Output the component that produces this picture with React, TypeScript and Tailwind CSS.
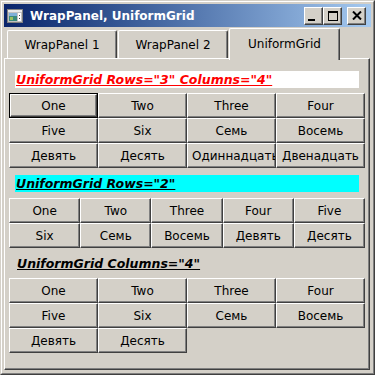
import React from 'react';

const font = { fontFamily: '"DejaVu Sans", Verdana, sans-serif' };

const raised =
  'flex items-center [justify-content:safe_center] overflow-hidden whitespace-nowrap bg-[#d4d0c8] border border-t-white border-l-white border-r-[#404040] border-b-[#404040] shadow-[inset_-1px_-1px_0_#808080] text-[12px] text-black px-[4px]';

const Btn = ({ label, focused }: { label: string; focused?: boolean }) => {
  if (focused) {
    return (
      <div className="flex border border-black">
        <div className={raised + ' flex-1'}>{label}</div>
      </div>
    );
  }
  return <div className={raised}>{label}</div>;
};

const first = ['One', 'Two', 'Three', 'Four', 'Five', 'Six', 'Семь', 'Восемь', 'Девять', 'Десять', 'Одиннадцать', 'Двенадцать'];
const second = ['One', 'Two', 'Three', 'Four', 'Five', 'Six', 'Семь', 'Восемь', 'Девять', 'Десять'];

const TitleButton = ({ children, className }: { children: React.ReactNode; className?: string }) => (
  <div
    className={
      'flex h-[18px] w-[19px] items-center justify-center bg-[#d4d0c8] border border-t-white border-l-white border-r-[#404040] border-b-[#404040] shadow-[inset_-1px_-1px_0_#808080] ' +
      (className ?? '')
    }
  >
    {children}
  </div>
);

const App = () => {
  return (
    <div style={font} className="h-[375px] w-[375px] border border-t-[#d4d0c8] border-l-[#d4d0c8] border-r-[#404040] border-b-[#404040] bg-[#d4d0c8]">
      <div className="flex h-full flex-col border border-t-white border-l-white border-r-[#808080] border-b-[#808080] p-[2px]">
        {/* title bar */}
        <div className="flex h-[23px] shrink-0 items-center bg-linear-to-r from-[#0a246a] to-[#a6caf0] pl-[3px] pr-[5px]">
          <svg width="16" height="14" viewBox="0 0 16 14">
            <rect x="0.5" y="0.5" width="15" height="13" fill="#c0c0c0" stroke="#808080" />
            <rect x="1" y="1" width="14" height="2" fill="#e8e8e8" />
            <rect x="2" y="4" width="8" height="8" fill="#3a8a7a" />
            <rect x="2" y="4" width="8" height="3" fill="#7fb0d8" />
            <rect x="3" y="8" width="3" height="3" fill="#9ac060" />
            <rect x="11" y="4" width="3" height="8" fill="#ffffff" />
            <rect x="12" y="6" width="1" height="1" fill="#404040" />
            <rect x="12" y="9" width="1" height="1" fill="#404040" />
          </svg>
          <div className="ml-[7px] text-[12px] font-bold text-white">WrapPanel, UniformGrid</div>
          <div className="ml-auto flex">
            <TitleButton>
              <div className="mt-[8px] mr-[4px] h-[2px] w-[7px] bg-black" />
            </TitleButton>
            <TitleButton>
              <div className="h-[10px] w-[10px] border border-t-2 border-black" />
            </TitleButton>
            <TitleButton className="ml-[5px]">
              <svg width="10" height="9" viewBox="0 0 10 9">
                <path d="M1 0.5 L9 8.5 M9 0.5 L1 8.5" stroke="black" strokeWidth="2" />
              </svg>
            </TitleButton>
          </div>
        </div>

        {/* tabs */}
        <div className="mt-[1px] flex h-[30px] shrink-0 items-end pl-[3px] text-[12px] text-black">
          <div className="flex h-[28px] w-[110px] items-center justify-center rounded-t-[2px] border border-b-0 border-t-white border-l-white border-r-[#404040] shadow-[inset_-1px_0_0_#808080]">
            WrapPanel 1
          </div>
          <div className="ml-[1px] flex h-[28px] w-[110px] items-center justify-center rounded-t-[2px] border border-b-0 border-t-white border-l-white border-r-[#404040] shadow-[inset_-1px_0_0_#808080]">
            WrapPanel 2
          </div>
          <div className="relative z-10 -mb-[2px] ml-[1px] flex h-[32px] w-[111px] items-center justify-center rounded-t-[2px] border border-b-0 border-t-white border-l-white border-r-[#404040] bg-[#d4d0c8] pb-[2px] shadow-[inset_-1px_0_0_#808080]">
            UniformGrid
          </div>
        </div>

        {/* tab content */}
        <div className="mr-[1px] mb-[1px] flex flex-1 flex-col border border-t-white border-l-white border-r-[#404040] border-b-[#404040] px-[4px] shadow-[inset_-1px_-1px_0_#808080]">
          <div className="mx-[6px] mt-[12px] h-[17px] bg-white pl-[1px] text-[12.5px] leading-[17px] font-bold italic text-[#ff0000] underline">
            UniformGrid Rows="3" Columns="4"
          </div>
          <div className="mt-[5px] grid grid-cols-4 grid-rows-[repeat(3,25px)]">
            {first.map((l, i) => (
              <Btn key={i} label={l} focused={i === 0} />
            ))}
          </div>

          <div className="mx-[6px] mt-[7px] h-[17px] bg-[#00ffff] pl-[1px] text-[12.5px] leading-[17px] font-bold italic text-black underline">
            UniformGrid Rows="2"
          </div>
          <div className="mt-[6px] grid grid-cols-5 grid-rows-[repeat(2,25px)]">
            {second.map((l, i) => (
              <Btn key={i} label={l} />
            ))}
          </div>

          <div className="mx-[6px] mt-[7px] h-[17px] pl-[2px] text-[12.5px] leading-[17px] font-bold italic text-black underline">
            UniformGrid Columns="4"
          </div>
          <div className="mt-[6px] grid grid-cols-4 grid-rows-[repeat(3,25px)]">
            {second.map((l, i) => (
              <Btn key={i} label={l} />
            ))}
          </div>
        </div>
      </div>
    </div>
  );
};

export default App;
